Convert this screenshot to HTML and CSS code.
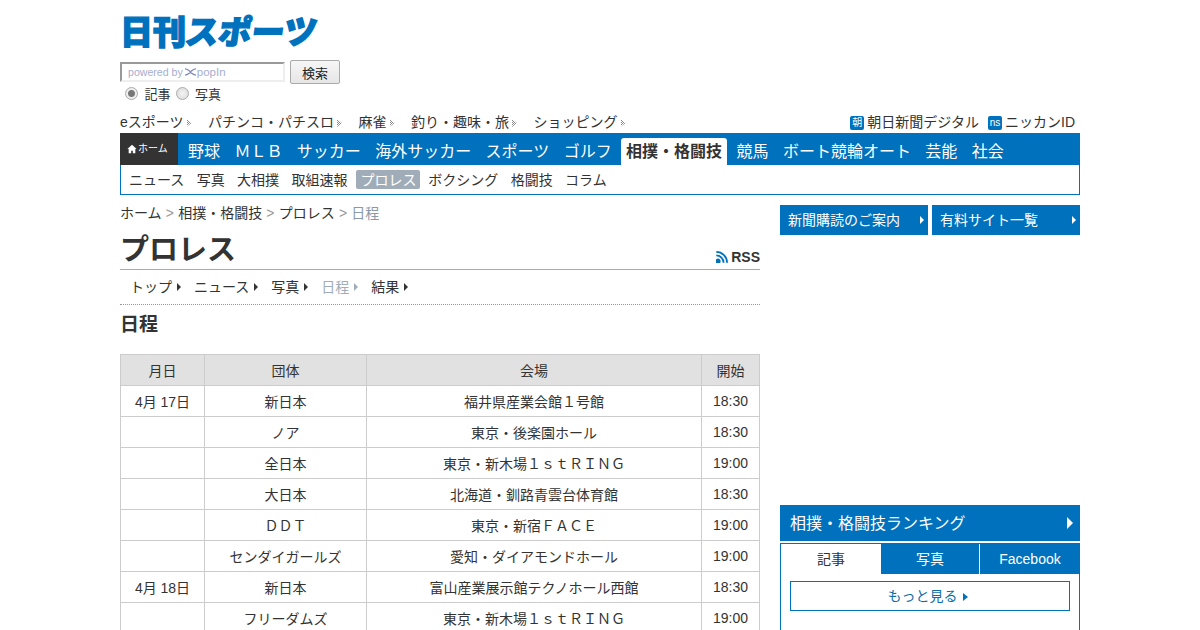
FILE: index.html
```html
<!DOCTYPE html>
<html lang="ja">
<head>
    <meta charset="UTF-8">
    <title>プロレス 日程 - 日刊スポーツ</title>
    <link rel="stylesheet" href="styles.css">
</head>
<body>
    <div class="wrapper">
        <header class="header">
            <div class="logo">日刊<span>スポーツ</span></div>
            <form class="search">
                <div class="search-row">
                    <div class="search-input">powered by
                        <svg class="popin-mark" viewBox="0 0 12 8"><path d="M0 0.5c3 0 4 2 6 3 2-1 3-3 6-3M0 7.5c3 0 4-2 6-3 2 1 3 3 6 3"></path></svg>
                        <span class="popin-name">popIn</span>
                    </div>
                    <button class="search-button" type="button">検索</button>
                </div>
                <div class="search-options">
                    <label><input type="radio" name="kind" checked>記事</label>
                    <label><input type="radio" name="kind">写真</label>
                </div>
            </form>
            <div class="util">
                <ul class="util-left">
                    <li>eスポーツ</li>
                    <li>パチンコ・パチスロ</li>
                    <li>麻雀</li>
                    <li>釣り・趣味・旅</li>
                    <li>ショッピング</li>
                </ul>
                <ul class="util-right">
                    <li><span class="util-badge">朝</span>朝日新聞デジタル</li>
                    <li><span class="util-badge">ns</span>ニッカンID</li>
                </ul>
            </div>
        </header>

        <nav class="global-nav">
            <a class="nav-home">
                <svg viewBox="0 0 12 12"><path d="M6 1L0.5 6h1.5v5h3V8h2v3h3V6h1.5z"></path></svg>ホーム
            </a>
            <a>野球</a>
            <a>ＭＬＢ</a>
            <a>サッカー</a>
            <a>海外サッカー</a>
            <a>スポーツ</a>
            <a>ゴルフ</a>
            <a class="active">相撲・格闘技</a>
            <a>競馬</a>
            <a>ボート競輪オート</a>
            <a>芸能</a>
            <a>社会</a>
        </nav>
        <nav class="sub-nav">
            <a>ニュース</a>
            <a>写真</a>
            <a>大相撲</a>
            <a>取組速報</a>
            <a class="active">プロレス</a>
            <a>ボクシング</a>
            <a>格闘技</a>
            <a>コラム</a>
        </nav>

        <div class="columns">
            <main class="main">
                <div class="breadcrumb">ホーム <i>&gt;</i> 相撲・格闘技 <i>&gt;</i> プロレス <i>&gt;</i> <span>日程</span></div>
                <div class="page-title">
                    <h1>プロレス</h1>
                    <a class="rss">
                        <svg viewBox="0 0 12 12"><circle cx="2" cy="10.2" r="1.7"></circle><path d="M0.3 4.4a7.3 7.3 0 0 1 7.3 7.3M0.3 0.9a10.8 10.8 0 0 1 10.8 10.8"></path></svg>RSS
                    </a>
                </div>
                <ul class="tabs">
                    <li>トップ</li>
                    <li>ニュース</li>
                    <li>写真</li>
                    <li class="current">日程</li>
                    <li>結果</li>
                </ul>
                <h2>日程</h2>
                <table class="schedule">
                    <thead>
                        <tr><th class="col-date">月日</th><th class="col-group">団体</th><th>会場</th><th class="col-time">開始</th></tr>
                    </thead>
                    <tbody>
                        <tr><td>4月 17日</td><td>新日本</td><td>福井県産業会館１号館</td><td>18:30</td></tr>
                        <tr><td></td><td>ノア</td><td>東京・後楽園ホール</td><td>18:30</td></tr>
                        <tr><td></td><td>全日本</td><td>東京・新木場１ｓｔＲＩＮＧ</td><td>19:00</td></tr>
                        <tr><td></td><td>大日本</td><td>北海道・釧路青雲台体育館</td><td>18:30</td></tr>
                        <tr><td></td><td>ＤＤＴ</td><td>東京・新宿ＦＡＣＥ</td><td>19:00</td></tr>
                        <tr><td></td><td>センダイガールズ</td><td>愛知・ダイアモンドホール</td><td>19:00</td></tr>
                        <tr><td>4月 18日</td><td>新日本</td><td>富山産業展示館テクノホール西館</td><td>18:30</td></tr>
                        <tr><td></td><td>フリーダムズ</td><td>東京・新木場１ｓｔＲＩＮＧ</td><td>19:00</td></tr>
                    </tbody>
                </table>
            </main>

            <aside class="side">
                <div class="side-links">
                    <a>新聞購読のご案内</a>
                    <a>有料サイト一覧</a>
                </div>
                <div class="ad-space"></div>
                <h3 class="ranking-title">相撲・格闘技ランキング</h3>
                <div class="ranking">
                    <div class="ranking-tabs">
                        <a class="active">記事</a>
                        <a>写真</a>
                        <a>Facebook</a>
                    </div>
                    <a class="more">もっと見る</a>
                </div>
            </aside>
        </div>
    </div>
</body>
</html>
```

FILE: styles.css
```css
* {
    margin: 0;
    padding: 0;
    box-sizing: border-box;
}

html {
    overflow: hidden;
}

body {
    background: #fff;
    color: #333;
    font-family: "Liberation Sans", "Noto Sans CJK JP", sans-serif;
    font-size: 14px;
}

ul {
    list-style: none;
}

.wrapper {
    width: 960px;
    margin: 0 auto;
}

/* logo is plain text, thickened with a stroke */
.logo {
    height: 36px;
    margin-top: 12px;
    width: 200px;
    color: #0071bc;
    font-family: "Noto Sans CJK JP", sans-serif;
    font-size: 33px;
    font-weight: 900;
    line-height: 36px;
    white-space: nowrap;
    -webkit-text-stroke: 1.4px #0071bc;
}

.logo span {
    display: inline-block;
    transform: skewX(-8deg);
}

.search {
    margin-top: 12px;
}

.search-row {
    display: flex;
    align-items: center;
    gap: 5px;
    height: 24px;
}

.search-input {
    display: flex;
    align-items: center;
    gap: 1px;
    width: 165px;
    height: 20px;
    padding-left: 6px;
    border: 2px solid #eee;
    border-top-color: #999;
    border-left-color: #999;
    color: #a6aed0;
    font-size: 10.6px;
}

.popin-mark {
    width: 11px;
    height: 8px;
    margin-left: 1px;
    fill: none;
    stroke: #7c86b8;
    stroke-width: 1.4;
}

.popin-name {
    font-size: 11.5px;
}

.search-button {
    width: 50px;
    height: 24px;
    border: 1px solid #aaa;
    border-radius: 2px;
    background: linear-gradient(#f6f6f6, #e6e6e6);
    color: #222;
    font-family: inherit;
    font-size: 13px;
}

.search-options {
    display: flex;
    gap: 5px;
    height: 20px;
    margin-top: 3px;
    padding-left: 5px;
    font-size: 13px;
    line-height: 16px;
}

.search-options label {
    display: flex;
    align-items: flex-start;
    gap: 6.5px;
}

.search-options input {
    appearance: none;
    width: 13px;
    height: 13px;
    border: 1px solid #aaa;
    border-radius: 50%;
    background: radial-gradient(circle, #f4f4f4, #d8d8d8);
}

.search-options input:checked {
    background: radial-gradient(circle, #777 0 3px, #eee 4px);
}

.util {
    display: flex;
    justify-content: space-between;
    height: 20px;
    margin-top: 6px;
    padding-right: 5px;
    line-height: 18px;
}

.util-left {
    display: flex;
    gap: 16.5px;
}

.util-left li::after {
    content: "";
    display: inline-block;
    width: 5px;
    height: 8px;
    margin-left: 3px;
    background: conic-gradient(#888 25%, #fff 0 50%, #888 0 75%, #fff 0) 0 0 / 2px 2px;
    clip-path: polygon(0 0, 100% 50%, 0 100%);
}

.util-right {
    display: flex;
    gap: 9px;
}

.util-badge {
    display: inline-block;
    width: 14px;
    height: 14px;
    margin-right: 3px;
    border-radius: 2px;
    background: #0071bc;
    color: #fff;
    font-size: 10px;
    line-height: 13px;
    text-align: center;
    vertical-align: 1px;
}

.global-nav {
    display: flex;
    align-items: flex-end;
    gap: 4.4px;
    height: 32px;
    background: #0071bc;
    color: #fff;
    font-size: 16px;
}

.global-nav a {
    height: 27px;
    padding: 0 5px;
    line-height: 28px;
    white-space: nowrap;
}

.global-nav .nav-home {
    display: flex;
    align-items: center;
    gap: 1px;
    width: 58px;
    height: 32px;
    margin-right: 0.6px;
    padding-left: 7px;
    background: #333;
    font-size: 10px;
    line-height: 32px;
}

.nav-home svg {
    width: 10px;
    height: 10px;
    fill: #fff;
}

.global-nav .active {
    border-radius: 3px 3px 0 0;
    background: #fff;
    color: #333;
    font-weight: bold;
}

.sub-nav {
    display: flex;
    align-items: center;
    gap: 12.4px;
    height: 30px;
    padding-left: 8px;
    border: 1px solid #0071bc;
    border-top: 0;
}

.sub-nav a {
    height: 19px;
    line-height: 20px;
}

.sub-nav .active {
    margin: 0 -4.6px 0 -3.4px;
    padding: 0 4px;
    border-radius: 2px;
    background: #a0adb9;
    color: #fff;
}

.columns {
    display: flex;
    justify-content: space-between;
    margin-top: 10px;
}

.main {
    width: 640px;
}

.breadcrumb {
    height: 18px;
    line-height: 16px;
}

.breadcrumb i {
    margin: 0 0.3px;
    color: #999;
    font-style: normal;
}

.breadcrumb span {
    color: #8a99a8;
}

.page-title {
    display: flex;
    justify-content: space-between;
    align-items: flex-end;
    height: 47px;
    border-bottom: 1px solid #a0adb9;
}

h1 {
    font-size: 29px;
    font-weight: bold;
    line-height: 38px;
}

.rss {
    display: flex;
    align-items: center;
    gap: 3px;
    margin-bottom: 2px;
    font-weight: bold;
    line-height: 20px;
}

.rss svg {
    width: 12px;
    height: 12px;
    fill: #0071bc;
    stroke: #0071bc;
    stroke-width: 1.8;
}

.rss svg path {
    fill: none;
}

.tabs {
    display: flex;
    gap: 12px;
    height: 35px;
    padding-left: 10px;
    border-bottom: 1px dotted #999;
    line-height: 34px;
}

.tabs li {
    padding-right: 10px;
    position: relative;
}

.tabs li::after {
    content: "";
    position: absolute;
    top: 13px;
    right: 1px;
    border-left: 4px solid #333;
    border-top: 4px solid transparent;
    border-bottom: 4px solid transparent;
}

.tabs .current {
    color: #a0adb9;
}

.tabs .current::after {
    border-left-color: #a0adb9;
}

h2 {
    height: 49px;
    padding-top: 8px;
    font-size: 19px;
    font-weight: bold;
    line-height: 24px;
}

.schedule {
    width: 640px;
    table-layout: fixed;
    border-collapse: collapse;
}

.schedule th,
.schedule td {
    height: 31px;
    border: 1px solid #ccc;
    font-weight: normal;
    text-align: center;
}

.schedule th {
    background: #e1e1e1;
}

.col-date {
    width: 84px;
}

.col-group {
    width: 162px;
}

.col-time {
    width: 58px;
}

.side {
    width: 300px;
}

.side-links {
    display: flex;
    gap: 4px;
}

.side-links a {
    position: relative;
    width: 148px;
    height: 30px;
    padding-left: 8px;
    background: #0071bc;
    color: #fff;
    line-height: 30px;
}

.side-links a::after {
    content: "";
    position: absolute;
    top: 11px;
    right: 4px;
    border-left: 4px solid #fff;
    border-top: 4px solid transparent;
    border-bottom: 4px solid transparent;
}

.ad-space {
    height: 270px;
}

.ranking-title {
    position: relative;
    height: 36px;
    padding-left: 10px;
    background: #0071bc;
    color: #fff;
    font-size: 16px;
    font-weight: normal;
    line-height: 37px;
}

.ranking-title::after {
    content: "";
    position: absolute;
    top: 12px;
    right: 7px;
    border-left: 6px solid #fff;
    border-top: 6px solid transparent;
    border-bottom: 6px solid transparent;
}

.ranking {
    height: 100px;
    margin-top: 2px;
    border: 1px solid #0071bc;
}

.ranking-tabs {
    display: flex;
    margin-right: -1px;
    height: 30px;
}

.ranking-tabs a {
    flex: 0 0 98px;
    background: #0071bc;
    color: #fff;
    line-height: 30px;
    text-align: center;
}

.ranking-tabs a:last-child {
    flex: 1;
    margin-left: 1px;
}

.ranking-tabs .active {
    flex: 0 0 100px;
    background: #fff;
    color: #333;
}

.more {
    display: block;
    width: 280px;
    height: 30px;
    margin: 7px 0 0 9px;
    padding-right: 5px;
    border: 1px solid #0071bc;
    color: #0e6ea8;
    line-height: 28px;
    text-align: center;
}

.more::after {
    content: "";
    display: inline-block;
    margin-left: 5px;
    border-left: 5px solid #0071bc;
    border-top: 4px solid transparent;
    border-bottom: 4px solid transparent;
}
```
